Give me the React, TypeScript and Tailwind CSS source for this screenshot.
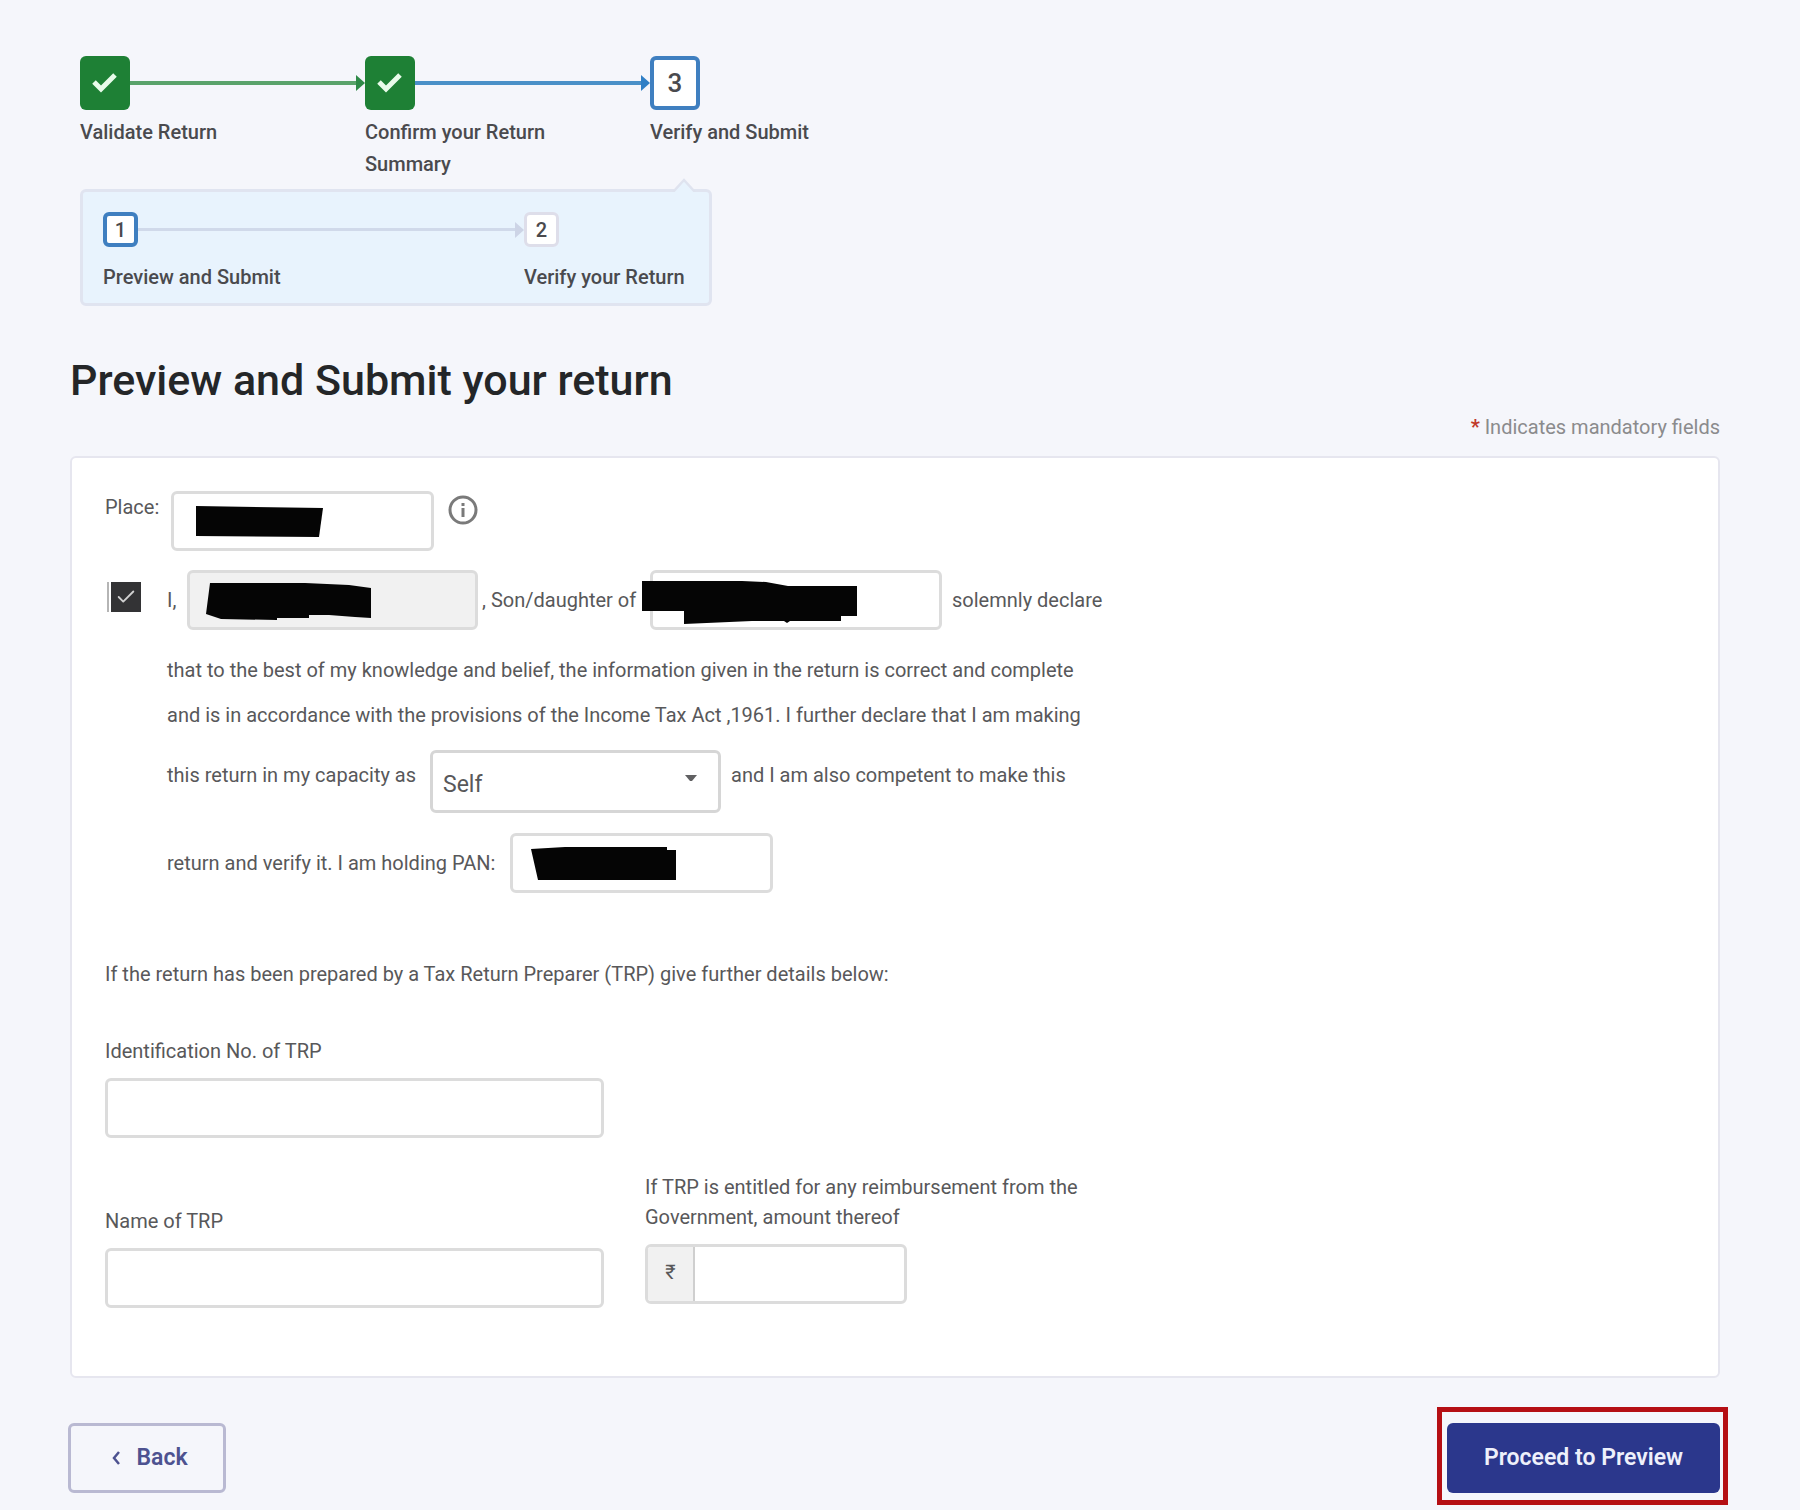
import { useState } from 'react';
import { Check } from 'lucide-react';

const inputClass =
  'h-[60px] rounded-md border-3 border-[#dcdcdc] px-4 text-[20px] text-[#4a4a4c] focus:border-[#2f7fc6] focus:outline-none';

function Connector({ line, arrow }: { line: string; arrow: string }) {
  return (
    <div className="flex flex-1 items-center">
      <div className={`flex-1 ${line}`} />
      <svg width="9" height="16" viewBox="0 0 9 16" className={arrow} aria-hidden="true">
        <path d="M0 0 L9 8 L0 16 Z" fill="currentColor" />
      </svg>
    </div>
  );
}

function DoneBox() {
  return (
    <div className="flex h-[54px] w-[50px] items-center justify-center rounded-md bg-[#1e8035]">
      <svg width="26" height="20" viewBox="0 0 26 20" aria-hidden="true">
        <path d="M2 9 L9 16 L23 2" fill="none" stroke="#e8fbea" strokeWidth="5" />
      </svg>
    </div>
  );
}

function Mask({ d, className }: { d: string; className: string }) {
  return (
    <svg width="220" height="46" viewBox="0 0 220 46" className={`pointer-events-none absolute ${className}`} aria-hidden="true">
      <path d={d} fill="#050505" />
    </svg>
  );
}

export default function App() {
  const [agreed, setAgreed] = useState(true);
  const [formData, setFormData] = useState({
    place: '',
    name: '',
    parent: '',
    capacity: 'self',
    pan: '',
    trpId: '',
    trpName: '',
    amount: ''
  });

  const handleChange = (e: React.ChangeEvent<HTMLInputElement | HTMLSelectElement>) => {
    const { name, value } = e.target;
    setFormData(prev => ({ ...prev, [name]: value }));
  };

  return (
    <div className="min-h-screen bg-[#f5f6fb] pt-14 pr-20 pb-4 pl-[70px] font-['Roboto','Liberation_Sans',sans-serif] text-[20px] text-[#58585a]">
      {/* Main steps */}
      <div className="ml-2.5">
        <ol className="flex font-medium leading-8 text-[#4a4a4e]">
          <li className="w-[285px]">
            <div className="flex">
              <DoneBox />
              <Connector line="h-[4px] bg-[#5aa36b]" arrow="text-[#2f8a48]" />
            </div>
            <p className="mt-1.5">Validate Return</p>
          </li>
          <li className="w-[285px]">
            <div className="flex">
              <DoneBox />
              <Connector line="h-[4px] bg-[#4a90c8]" arrow="text-[#2f7fc6]" />
            </div>
            <p className="mt-1.5 w-[200px]">Confirm your Return Summary</p>
          </li>
          <li>
            <div className="flex h-[54px] w-[50px] items-center justify-center rounded-md border-4 border-[#3f7fc0] bg-white text-[26px]">
              3
            </div>
            <p className="mt-1.5">Verify and Submit</p>
          </li>
        </ol>

        {/* Sub steps */}
        <div className="relative mt-[9px] w-[632px] rounded-md border-3 border-[#e0e4f0] bg-[#e8f3fd] px-5 pt-5 pb-2.5">
          <svg width="26" height="14" viewBox="0 0 26 14" className="absolute -top-3.5 right-3" aria-hidden="true">
            <path d="M2 14 L13 2 L24 14" fill="#e8f3fd" stroke="#dfe3ef" strokeWidth="2.5" />
          </svg>
          <ol className="flex font-medium leading-8 text-[#4a4a4e]">
            <li className="flex-1">
              <div className="flex">
                <div className="flex size-[35px] items-center justify-center rounded-md border-4 border-[#3f7fc0] bg-white">1</div>
                <Connector line="h-[3px] bg-[#d0d9ea]" arrow="text-[#cdd4e6]" />
              </div>
              <p className="mt-3.5">Preview and Submit</p>
            </li>
            <li className="w-[165px]">
              <div className="flex size-[35px] items-center justify-center rounded-md border-3 border-[#dedeea] bg-white">2</div>
              <p className="mt-3.5">Verify your Return</p>
            </li>
          </ol>
        </div>
      </div>

      <h1 className="mt-12 text-[43px] font-medium leading-[52px] text-[#242628]">Preview and Submit your return</h1>
      <p className="mt-[9px] text-right leading-6 text-[#8b8b8d]">
        <span className="font-bold text-[#c0392b]">*</span> Indicates mandatory fields
      </p>

      <form onSubmit={e => e.preventDefault()}>
        <div className="mt-[17px] rounded-md border-2 border-[#e6e6ef] bg-white px-[33px] pt-[33px] pb-[68px]">
          {/* Place */}
          <div className="flex items-start">
            <label htmlFor="place" className="w-[66px] leading-8">Place:</label>
            <div className="relative">
              <input id="place" name="place" value={formData.place} onChange={handleChange} className={`${inputClass} w-[263px] bg-white`} />
              <Mask d="M1 1 L128 3 L124 32 L1 31 Z" className="top-3.5 left-6" />
            </div>
            <button type="button" aria-label="Place information" className="mt-1 ml-3.5">
              <svg width="30" height="30" viewBox="0 0 30 30" fill="none" stroke="#7a7a7a" strokeWidth="3" aria-hidden="true">
                <circle cx="15" cy="15" r="13" />
                <path d="M15 13 V22 M15 8 V11" />
              </svg>
            </button>
          </div>

          {/* Declaration */}
          <div className="mt-[19px] flex items-center">
            <div className="relative flex w-[62px] pb-1.5 pl-0.5">
              <div className="mr-0.5 h-[30px] w-0.5 bg-[#b5b5b5]" />
              <input
                id="declare"
                type="checkbox"
                aria-label="I solemnly declare"
                checked={agreed}
                onChange={e => setAgreed(e.target.checked)}
                className="size-[30px] appearance-none border-2 border-[#333335] bg-white checked:bg-[#333335]"
              />
              {agreed && <Check size={22} strokeWidth={2} className="pointer-events-none absolute top-1 left-2.5 text-[#d0d0d0]" />}
            </div>
            <label htmlFor="name" className="w-[20px]">I,</label>
            <div className="relative">
              <input id="name" name="name" disabled value={formData.name} className={`${inputClass} w-[291px] bg-[#f1f1f1]`} />
              <Mask d="M5 1 L100 1 L144 3 L166 6 V36 L150 35 L124 33 L104 33 L104 36 L72 36 V38 L16 37 L1 32 Z" className="top-3 left-[18px]" />
            </div>
            <label htmlFor="parent" className="ml-1 w-[168px]">, Son/daughter of</label>
            <div className="relative">
              <input id="parent" name="parent" value={formData.parent} onChange={handleChange} className={`${inputClass} w-[292px] bg-white`} />
              <Mask d="M0 1 L100 1 L124 2 L146 6 H215 V36 H199 V41 L148 41 L145 43 L142 41 L110 41 L42 44 V31 H0 Z" className="top-2.5 -left-2" />
            </div>
            <span className="ml-2.5">solemnly declare</span>
          </div>

          <div className="ml-[62px]">
            <p className="mt-[18px] leading-[45px]">
              that to the best of my knowledge and belief, the information given in the return is correct and complete
              <br />
              and is in accordance with the provisions of the Income Tax Act ,1961. I further declare that I am making
            </p>
            <div className="mt-3 flex items-start leading-[50px]">
              <label htmlFor="capacity" className="w-[263px]">this return in my capacity as</label>
              <div className="relative">
                <select
                  id="capacity"
                  name="capacity"
                  value={formData.capacity}
                  onChange={handleChange}
                  className="h-[63px] w-[291px] appearance-none rounded-md border-3 border-[#d6d6d6] bg-white px-2.5 pt-1.5 text-[23px] text-[#58585a] focus:outline-none"
                >
                  <option value="self">Self</option>
                  <option value="representative">Representative</option>
                </select>
                <svg width="12" height="8" viewBox="0 0 12 8" className="pointer-events-none absolute top-6 right-6" aria-hidden="true">
                  <path d="M0 1 H12 L7 7 H5 Z" fill="#606062" />
                </svg>
              </div>
              <span className="ml-2.5">and I am also competent to make this</span>
            </div>
            <div className="mt-5 flex items-center">
              <label htmlFor="pan" className="w-[343px]">return and verify it. I am holding PAN:</label>
              <div className="relative">
                <input id="pan" name="pan" value={formData.pan} onChange={handleChange} className={`${inputClass} w-[263px] bg-white`} />
                <Mask d="M1 2 L35 0 H137 V3 H146 V33 H8 Z" className="top-3.5 left-5" />
              </div>
            </div>
          </div>

          {/* Tax return preparer */}
          <p className="mt-[66px] leading-[30px]">If the return has been prepared by a Tax Return Preparer (TRP) give further details below:</p>

          <div className="mt-[47px] flex w-[499px] flex-col gap-3">
            <label htmlFor="trpId" className="leading-[30px]">Identification No. of TRP</label>
            <input id="trpId" name="trpId" value={formData.trpId} onChange={handleChange} className={`${inputClass} bg-white`} />
          </div>

          <div className="mt-[34px] flex items-start gap-[41px]">
            <div className="mt-[34px] flex w-[499px] flex-col gap-3">
              <label htmlFor="trpName" className="leading-[30px]">Name of TRP</label>
              <input id="trpName" name="trpName" value={formData.trpName} onChange={handleChange} className={`${inputClass} bg-white`} />
            </div>
            <div className="flex flex-col gap-3">
              <label htmlFor="amount" className="leading-[30px]">
                If TRP is entitled for any reimbursement from the
                <br />
                Government, amount thereof
              </label>
              <div className="flex h-[60px] w-[262px] overflow-hidden rounded-md border-3 border-[#dcdcdc]">
                <span className="flex w-[47px] items-center justify-center border-r-2 border-[#cfcfcf] bg-[#f1f1f1] pb-1">₹</span>
                <input id="amount" name="amount" value={formData.amount} onChange={handleChange} className="min-w-0 flex-1 px-3 focus:outline-none" />
              </div>
            </div>
          </div>
        </div>

        {/* Form actions */}
        <div className="mt-[45px] flex justify-between text-[23px] font-semibold">
          <button
            type="button"
            className="-ml-0.5 flex h-[70px] w-[158px] items-center justify-center gap-4 rounded-md border-3 border-[#b9b9d2] pl-1.5 text-[#4d5290]"
          >
            <svg width="8" height="14" viewBox="0 0 8 14" fill="none" stroke="currentColor" strokeWidth="2.5" aria-hidden="true">
              <path d="M7 1 L2 7 L7 13" />
            </svg>
            Back
          </button>
          <div className="relative">
            <button type="submit" className="h-[70px] w-[273px] rounded-md bg-[#2b378c] text-[#eef0fb]">
              Proceed to Preview
            </button>
            <div className="pointer-events-none absolute -top-4 -right-2 -bottom-3 -left-2.5 border-[5px] border-[#b50f14]" />
          </div>
        </div>
      </form>
    </div>
  );
}
